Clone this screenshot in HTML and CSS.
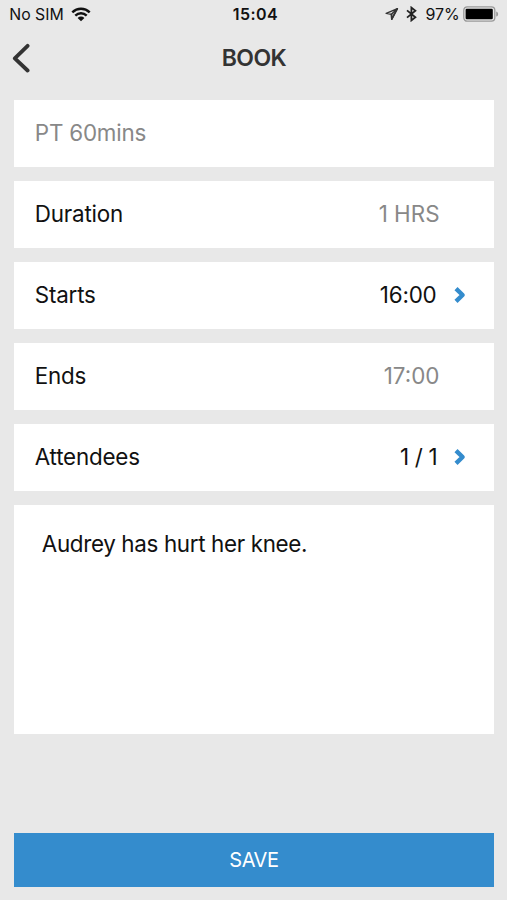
FILE: index.html
```html
<!DOCTYPE html>
<html lang="en">
<head>
<meta charset="utf-8">
<title>Book</title>
<link rel="stylesheet" href="styles.css">
</head>
<body>
<div class="screen">
  <div class="status">
    <div class="status-left">
      <span class="carrier">No SIM</span>
      <svg class="wifi" width="20" height="15" viewBox="0 0 20 15" fill="none" stroke="#111" stroke-width="2.5"><path d="M1.3 5.3C6.2.7 13.8.7 18.7 5.3M4.3 8.6c3.3-3 8.1-3 11.4 0"/><path d="M6.6 10.9c2-1.8 4.8-1.8 6.8 0L10 14.3Z" fill="#111" stroke="none"/></svg>
    </div>
    <span class="clock">15:04</span>
    <div class="status-right">
      <svg class="location" width="14" height="14" viewBox="0 0 14 14" fill="none" stroke="#333" stroke-width="1.4" stroke-linejoin="round"><path d="M12.4 1.6 1.2 6.4l5.2.9.3 5Z"/><path d="m12.4 1.6-6 5.7.3 5Z" fill="#222" fill-opacity=".35"/></svg>
      <svg class="bluetooth" width="11" height="16" viewBox="0 0 11 16" fill="none" stroke="#222" stroke-width="1.8"><path d="m1 4.4 8.4 6.8-4 3.2V1.6l4 3.2L1 11.6"/></svg>
      <span class="percent">97%</span>
      <svg class="battery" width="36" height="16" viewBox="0 0 36 16"><rect x=".8" y=".8" width="31" height="14.4" rx="3.4" fill="#e8e8e8" stroke="#999" stroke-width="1.3"/><rect x="2.6" y="2.8" width="27.2" height="10.4" rx="1.2" fill="#000"/><path d="M33.2 5.4c2.6.7 2.6 4.5 0 5.2Z" fill="#999"/></svg>
    </div>
  </div>
  <header class="nav">
    <svg class="back" width="20" height="30" viewBox="0 0 20 30" fill="none" stroke="#333" stroke-width="3.8" stroke-linecap="round" stroke-linejoin="round"><path d="M16.6 2.8 3.8 15.3l12.8 12.2"/></svg>
    <h1 class="title">BOOK</h1>
  </header>
  <main class="form">
    <div class="row"><span class="label muted">PT 60mins</span></div>
    <div class="row"><span class="label">Duration</span><span class="value muted">1 HRS</span></div>
    <div class="row"><span class="label">Starts</span><span class="value">16:00</span><svg class="chevron" width="13" height="18" viewBox="0 0 13 18" fill="none" stroke="#348ccd" stroke-width="4.4" stroke-linejoin="round"><path d="m2 2.6 6.6 6.4L2 15.4"/></svg></div>
    <div class="row"><span class="label">Ends</span><span class="value muted">17:00</span></div>
    <div class="row"><span class="label">Attendees</span><span class="value count">1 / 1</span><svg class="chevron" width="13" height="18" viewBox="0 0 13 18" fill="none" stroke="#348ccd" stroke-width="4.4" stroke-linejoin="round"><path d="m2 2.6 6.6 6.4L2 15.4"/></svg></div>
    <div class="notes"><span class="note">Audrey has hurt her knee.</span></div>
  </main>
  <button class="save"><span class="save-label">SAVE</span></button>
</div>
</body>
</html>
```
FILE: styles.css
```css
* { box-sizing: border-box; }
body {
  margin: 0;
  background: #e8e8e8;
  color: #111;
  font-family: Inter, "Liberation Sans", sans-serif;
}
.screen {
  height: 900px;
  display: flex;
  flex-direction: column;
  padding: 0 13.5px 13.5px 14.3px;
}
.status {
  height: 29px;
  margin: 0 -5px 0 -5px;
  display: grid;
  grid-template-columns: 1fr auto 1fr;
  align-items: center;
  font-size: 16px;
  line-height: 20px;
  white-space: nowrap;
}
.status-left, .status-right { display: flex; align-items: center; }
.status-right { justify-content: flex-end; }
.carrier { font-size: 15.8px; }
.wifi { margin-left: 7.5px; }
.clock { font-weight: 600; letter-spacing: 0.4px; padding: 0 0 1px 3px; }
.location { margin-top: -1px; }
.bluetooth { margin: -1px 8px 0 7px; }
.percent { margin-right: 3.5px; padding-bottom: 1px; letter-spacing: -0.1px; }
.battery { margin: -1px -0.5px 0 0; }
.nav {
  height: 57px;
  display: grid;
  grid-template-columns: 20px 1fr 20px;
  align-items: center;
  margin-left: -3px;
}
.title {
  margin: 0;
  padding-left: 3px;
  text-align: center;
  font-size: 23px;
  font-weight: 600;
  letter-spacing: -0.6px;
  color: #333;
}
.form {
  margin-top: 14px;
  display: flex;
  flex-direction: column;
  gap: 13.6px;
}
.row {
  height: 67.4px;
  background: #fff;
  display: flex;
  align-items: center;
  padding: 0 27px 2px 20.5px;
  font-size: 22.4px;
  letter-spacing: -0.2px;
  line-height: 28px;
}
.value { margin-left: auto; }
.muted { color: #888; }
.value.muted { margin-right: 27px; letter-spacing: 0; }
.count { word-spacing: -1.5px; letter-spacing: 0.4px; margin-right: -1.5px; }
.chevron { margin: 1px 0 0 17px; }
.notes {
  height: 229px;
  background: #fff;
  padding: 25px 27.5px;
  font-size: 22.4px;
  letter-spacing: -0.34px;
  line-height: 28px;
}
.save {
  margin-top: auto;
  height: 54px;
  border: 0;
  background: #348ccd;
  color: #fff;
  font: 20px/26px Inter, "Liberation Sans", sans-serif;
  letter-spacing: -0.5px;
}
```
